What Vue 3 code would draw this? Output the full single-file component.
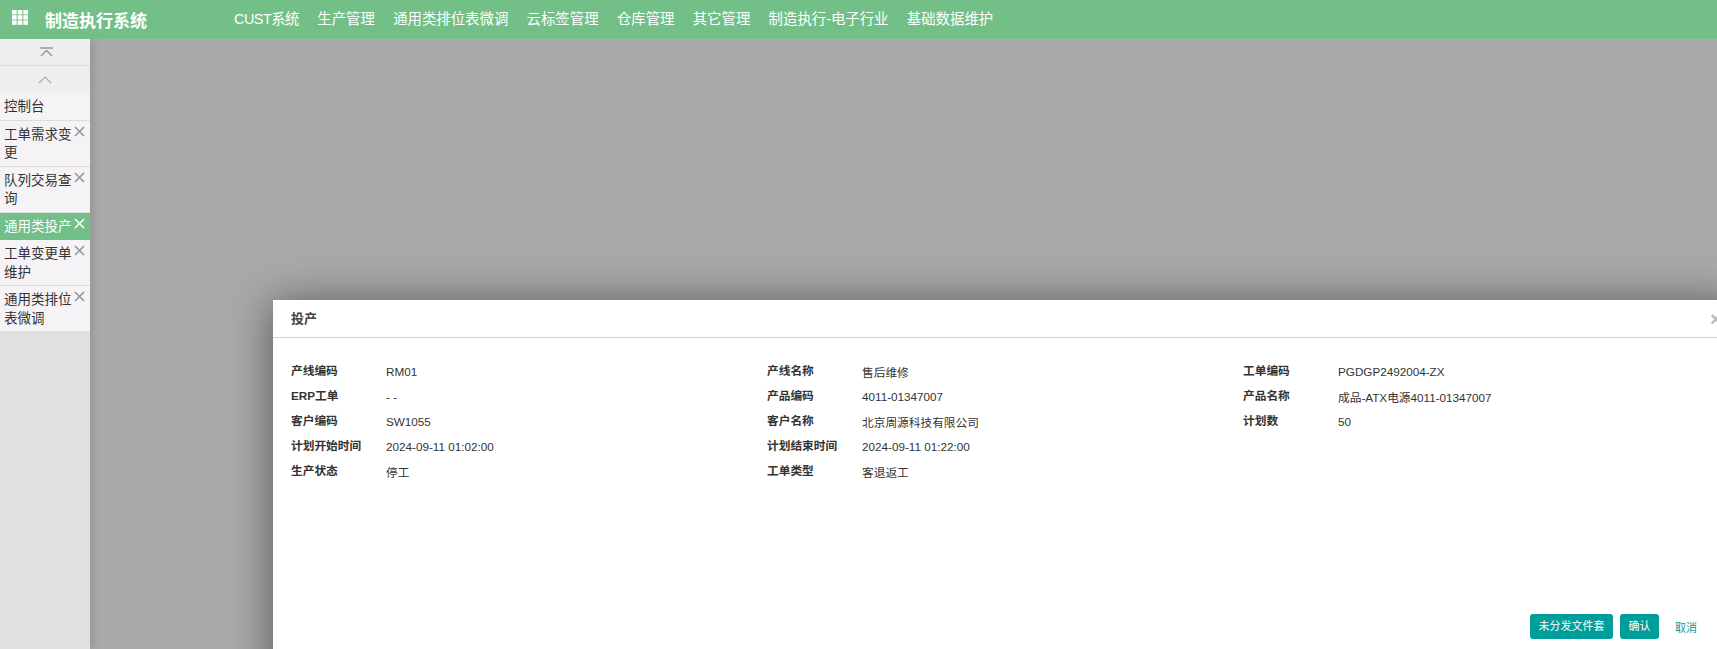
<script setup>
const nav = ['CUST系统', '生产管理', '通用类排位表微调', '云标签管理', '仓库管理', '其它管理', '制造执行-电子行业', '基础数据维护']
const tabs = [
  { name: '控制台', closable: false },
  { name: '工单需求变更', closable: true },
  { name: '队列交易查询', closable: true },
  { name: '通用类投产', closable: true, active: true },
  { name: '工单变更单维护', closable: true },
  { name: '通用类排位表微调', closable: true }
]
const fields = [
  ['产线编码', 'RM01'], ['产线名称', '售后维修'], ['工单编码', 'PGDGP2492004-ZX'],
  ['ERP工单', '- -'], ['产品编码', '4011-01347007'], ['产品名称', '成品-ATX电源4011-01347007'],
  ['客户编码', 'SW1055'], ['客户名称', '北京周源科技有限公司'], ['计划数', '50'],
  ['计划开始时间', '2024-09-11 01:02:00'], ['计划结束时间', '2024-09-11 01:22:00'], null,
  ['生产状态', '停工'], ['工单类型', '客退返工'], null
]
const squares = [0, 1, 2].flatMap(r => [0, 1, 2].map(c => ({ x: c * 5.67, y: r * 5.2 })))
</script>

<template>
  <div class="page">
    <header class="topbar">
      <svg class="apps" width="16" height="15" viewBox="0 0 16 15">
        <rect v-for="(s, i) in squares" :key="i" :x="s.x" :y="s.y" width="4.66" height="4.4" fill="#fff" />
      </svg>
      <div class="brand">制造执行系统</div>
      <nav class="nav">
        <span v-for="n in nav" :key="n">{{ n }}</span>
      </nav>
    </header>
    <div class="main">
      <aside class="side">
        <div class="ctl first">
          <svg width="15" height="10" viewBox="0 0 15 10" fill="none" stroke="#999" stroke-width="1.5">
            <path d="M1 1H14M2 9L7.5 3.5L13 9" />
          </svg>
        </div>
        <div class="ctl second">
          <svg width="14" height="8" viewBox="0 0 14 8" fill="none" stroke="#aaa" stroke-width="1.1">
            <path d="M1 7L7 1L13 7" />
          </svg>
        </div>
        <div v-for="t in tabs" :key="t.name" class="tab" :class="{ active: t.active }">
          <span class="tab-name">{{ t.name }}</span>
          <svg v-if="t.closable" class="close" width="11" height="11" viewBox="0 0 11 11" fill="none" stroke-width="1.5">
            <path d="M1 1L10 10M10 1L1 10" />
          </svg>
        </div>
      </aside>
      <div class="shade"></div>
    </div>
    <section class="dialog">
      <div class="dlg-head">
        <span class="dlg-title">投产</span>
        <span class="dlg-x">×</span>
      </div>
      <div class="dlg-body">
        <template v-for="(f, i) in fields" :key="i">
          <div v-if="f" class="field">
            <span class="label">{{ f[0] }}</span>
            <span class="value">{{ f[1] }}</span>
          </div>
          <div v-else></div>
        </template>
      </div>
      <div class="dlg-foot">
        <span class="btn">未分发文件套</span>
        <span class="btn">确认</span>
        <span class="btn-link">取消</span>
      </div>
    </section>
  </div>
</template>

<style>
html, body { margin: 0; overflow: hidden; }
</style>

<style scoped>
.page {
  position: relative;
  width: 1717px;
  height: 649px;
  overflow: hidden;
  display: flex;
  flex-direction: column;
  font-family: "Liberation Sans", "Noto Sans CJK SC", sans-serif;
  color: #333;
}
.topbar {
  height: 39px;
  flex: none;
  background: #72bf87;
  display: flex;
  align-items: center;
  color: #fff;
  padding-left: 12px;
  position: relative;
  z-index: 2;
}
.apps { margin-top: -4px; flex: none; }
.brand {
  margin-left: 17px;
  font-size: 17px;
  font-weight: 700;
  width: 189px;
  flex: none;
  margin-top: -1px;
}
.nav {
  display: flex;
  gap: 18.3px;
  font-size: 14.4px;
  white-space: nowrap;
  margin-top: -5px;
}
.nav span:first-child { letter-spacing: -0.5px; }
.main { flex: 1; display: flex; min-height: 0; }
.side {
  width: 90px;
  flex: none;
  background: #e0e0e0;
  position: relative;
  z-index: 1;
  box-shadow: 3px 0 8px rgba(0, 0, 0, 0.12);
}
.ctl {
  display: flex;
  align-items: center;
  justify-content: center;
  background: #eeeeee;
  box-sizing: border-box;
  border-bottom: 1px solid #dcdcdc;
}
.first { height: 27px; padding-left: 2px; }
.second { height: 27px; border-bottom: 0; }
.tab {
  position: relative;
  background: #f5f3f5;
  box-sizing: border-box;
  border-bottom: 1px solid #dcdcdc;
  padding: 5px 18px 3px 4px;
  font-size: 13.5px;
  line-height: 18.5px;
  color: #333;
  word-break: break-all;
}
.tab:last-child { border-bottom: 0; }
.tab-name { display: block; width: 68px; }
.tab.active { background: #72bf87; color: #fff; border-bottom-color: #72bf87; }
.close { position: absolute; right: 5px; top: 5px; stroke: #8f959b; }
.active .close { stroke: #fff; }
.shade { flex: 1; background: #a9a9a9; }
.dialog {
  position: absolute;
  left: 273px;
  top: 300px;
  width: 1470px;
  height: 380px;
  background: #fff;
  box-shadow: 0 3px 40px rgba(0, 0, 0, 0.5);
  z-index: 3;
}
.dlg-head {
  height: 37px;
  box-sizing: content-box;
  border-bottom: 1px solid #d0d0d0;
  display: flex;
  align-items: center;
  padding-left: 18px;
  position: relative;
}
.dlg-title { font-size: 13px; font-weight: 700; color: #444; margin-top: -3px; }
.dlg-x {
  position: absolute;
  left: 1437px;
  top: 9px;
  font-size: 20px;
  line-height: 20px;
  font-weight: 700;
  color: #bbb;
}
.dlg-body {
  display: grid;
  grid-template-columns: repeat(3, 476px);
  grid-auto-rows: 25px;
  padding: 21px 0 0 18px;
  font-size: 11.7px;
}
.field { display: flex; align-items: center; }
.label {
  width: 95px;
  flex: none;
  font-weight: 700;
  color: #333;
  margin-top: -4px;
}
.value { color: #333; }
.dlg-foot {
  position: absolute;
  left: 1257px;
  top: 314px;
  display: flex;
  align-items: center;
  gap: 7px;
  font-size: 11px;
}
.btn {
  height: 25px;
  line-height: 25px;
  padding: 0 8.5px;
  background: #009e9a;
  color: #fff;
  border-radius: 3px;
  white-space: nowrap;
}
.btn-link { color: #009e9a; margin-left: 9px; white-space: nowrap; }
</style>
